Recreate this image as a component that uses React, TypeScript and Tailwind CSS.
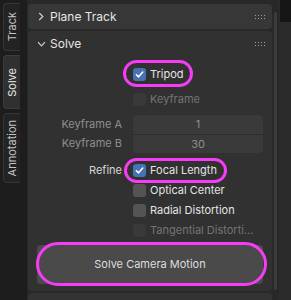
import React from 'react';

const FONT = "font-['Inter','Noto_Sans','Liberation_Sans',sans-serif]";

const Check = ({ on = false, disabled = false }: { on?: boolean; disabled?: boolean }) => (
  <span
    className={`w-[13px] h-[13px] shrink-0 rounded-[3px] flex items-center justify-center ${
      on ? 'bg-[#4772b3]' : disabled ? 'bg-[#393939]' : 'bg-[#545454]'
    }`}
  >
    {on && (
      <svg width="9" height="9" viewBox="0 0 10 10">
        <path d="M1.5 5.2 L4 7.6 L8.6 2.2" fill="none" stroke="#fff" strokeWidth="1.7" strokeLinecap="round" strokeLinejoin="round" />
      </svg>
    )}
  </span>
);

const Dots = () => (
  <div className="grid grid-cols-4 gap-x-[2px] gap-y-[2px]">
    {Array.from({ length: 8 }).map((_, i) => (
      <span key={i} className="w-[1px] h-[1px] bg-[#a0a0a0]" />
    ))}
  </div>
);

const Highlight = ({ className }: { className: string }) => (
  <span className={`absolute border-[3px] border-[#f53df5] rounded-full pointer-events-none ${className}`} />
);

const Row = ({
  label,
  children,
}: {
  label?: string;
  children: React.ReactNode;
}) => (
  <div className="flex items-center h-[20px]">
    <div className="w-[94px] text-right text-[#d6d6d6] pr-0">{label}</div>
    <div className="ml-[11px] flex-1 flex items-center">{children}</div>
  </div>
);

const CheckItem = ({
  text,
  on,
  disabled,
}: {
  text: string;
  on?: boolean;
  disabled?: boolean;
}) => (
  <div className="flex items-center gap-[4px]">
    <Check on={on} disabled={disabled} />
    <span className={disabled ? 'text-[#747474]' : 'text-[#e4e4e4]'}>{text}</span>
  </div>
);

const Tab = ({ text, active, h }: { text: string; active?: boolean; h: string }) => (
  <div
    className={`w-[17px] ${h} rounded-l-[4px] border border-r-0 flex items-center justify-center ${
      active ? 'bg-[#303030] border-[#3c3c3c] text-[#e8e8e8]' : 'bg-[#232323] border-[#363636] text-[#c4c4c4]'
    }`}
  >
    <span className="[writing-mode:vertical-rl] rotate-180 leading-none">{text}</span>
  </div>
);

export default function App() {
  return (
    <div className={`w-[291px] h-[300px] bg-[#1d1d1d] flex overflow-hidden text-[11px] ${FONT}`}>
      {/* side tabs */}
      <div className="w-[27px] pl-[3px] pt-[3px] flex flex-col gap-[4px]">
        <Tab text="Track" h="h-[48px]" />
        <Tab text="Solve" active h="h-[54px]" />
        <Tab text="Annotation" h="h-[70px]" />
      </div>

      {/* panels region */}
      <div className="w-[252px] bg-[#282828] flex">
        <div className="w-[244px] ml-[1px] pt-[4px] flex flex-col gap-[2px]">
          {/* Plane Track (closed) */}
          <div className="h-[25px] shrink-0 bg-[#373737] rounded-[4px] flex items-center pl-[8px] pr-[7px]">
            <div className="w-[10px] flex justify-center">
              <svg width="6" height="9" viewBox="0 0 6 9">
                <path d="M1.2 1 L4.8 4.5 L1.2 8" fill="none" stroke="#cfcfcf" strokeWidth="1.2" />
              </svg>
            </div>
            <span className="ml-[4px] text-[#e6e6e6] text-[12px]">Plane Track</span>
            <div className="ml-auto">
              <Dots />
            </div>
          </div>

          {/* Solve (open) */}
          <div className="h-[260px] shrink-0 bg-[#313131] rounded-[4px] flex flex-col">
            <div className="h-[25px] shrink-0 flex items-center pl-[8px] pr-[7px]">
              <div className="w-[10px] flex justify-center">
                <svg width="9" height="6" viewBox="0 0 9 6">
                  <path d="M1 1.2 L4.5 4.8 L8 1.2" fill="none" stroke="#cfcfcf" strokeWidth="1.2" />
                </svg>
              </div>
              <span className="ml-[4px] text-[#e6e6e6] text-[12px]">Solve</span>
              <div className="ml-auto">
                <Dots />
              </div>
            </div>

            <div className="mt-[8px]">
              <Row>
                <div className="relative">
                  <CheckItem text="Tripod" on />
                  <Highlight className="-left-[10px] -right-[9px] -top-[6px] -bottom-[5px]" />
                </div>
              </Row>
            </div>
            <div className="mt-[5px]">
              <Row>
                <CheckItem text="Keyframe" disabled />
              </Row>
            </div>

            <div className="mt-[6px] flex">
              <div className="w-[94px] flex flex-col text-right text-[#8e8e8e]">
                <div className="h-[19px] leading-[19px]">Keyframe A</div>
                <div className="h-[19px] leading-[19px]">Keyframe B</div>
              </div>
              <div className="ml-[11px] w-[130px] flex flex-col rounded-[4px] overflow-hidden text-[#8e8e8e]">
                <div className="h-[19px] bg-[#3a3a3a] flex items-center justify-center">1</div>
                <div className="h-[19px] bg-[#3a3a3a] border-t border-[#2c2c2c] flex items-center justify-center">30</div>
              </div>
            </div>

            <div className="mt-[7px]">
              <Row label="Refine">
                <div className="relative">
                  <CheckItem text="Focal Length" on />
                  <Highlight className="-left-[9px] -right-[10px] -top-[4px] -bottom-[5px]" />
                </div>
              </Row>
              <Row>
                <CheckItem text="Optical Center" />
              </Row>
              <Row>
                <CheckItem text="Radial Distortion" />
              </Row>
              <Row>
                <CheckItem text="Tangential Distorti..." disabled />
              </Row>
            </div>

            <div className="mt-[5px] px-[9px] relative">
              <div className="h-[39px] bg-[#4a4a4a] rounded-[4px] flex items-center justify-center text-[#dedede]">
                Solve Camera Motion
              </div>
              <Highlight className="left-[8px] right-[5px] -top-[3px] -bottom-[2px]" />
            </div>
          </div>

          {/* next panel peeking */}
          <div className="h-[20px] shrink-0 bg-[#333333] rounded-[4px]" />
        </div>

        {/* scrollbar */}
        <div className="ml-[2px] pt-[12px]">
          <div className="w-[3px] h-[278px] bg-[#3b3b3b] rounded-full" />
        </div>
      </div>

      {/* neighbouring area */}
      <div className="flex-1 bg-[#2b2b2b] pl-[1px]">
        <div className="h-[22px] bg-[#161616]" />
      </div>
    </div>
  );
}
